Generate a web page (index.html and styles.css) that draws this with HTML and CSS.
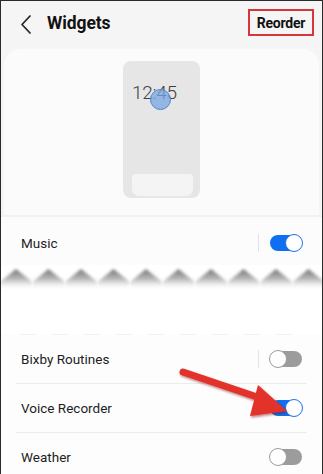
FILE: index.html
```html
<!DOCTYPE html>
<html>
<head>
<meta charset="utf-8">
<link rel="stylesheet" href="styles.css">
</head>
<body>
<div class="frame">
  <header class="topbar">
    <svg class="back" width="14" height="20" viewBox="0 0 14 20"><path d="M10 2 L2 10.5 L10 19" fill="none" stroke="#222" stroke-width="1.7" stroke-linecap="round" stroke-linejoin="round"/></svg>
    <h1 class="title">Widgets</h1>
    <span class="reorder">Reorder</span>
  </header>

  <section class="preview">
    <div class="phone">
      <div class="time">12:45</div>
      <div class="dot"></div>
      <div class="dock"></div>
    </div>
  </section>

  <section class="card">
    <div class="row">
      <span class="label">Music</span>
      <span class="vdiv"></span>
      <span class="toggle on"><span class="thumb"></span></span>
    </div>
    <div class="divider"></div>
  </section>

  <div class="tear">
    <svg width="323" height="26" viewBox="0 0 323 26">
      <defs>
        <linearGradient id="sh" x1="0" y1="0" x2="0" y2="1">
          <stop offset="0" stop-color="#747474"/>
          <stop offset="0.5" stop-color="#bdbdbd"/>
          <stop offset="1" stop-color="#ffffff" stop-opacity="0"/>
        </linearGradient>
        <filter id="bl"><feGaussianBlur stdDeviation="1.4"/></filter>
        <pattern id="zz" width="32.5" height="26" patternUnits="userSpaceOnUse" x="-1">
          <polygon points="0,17 16,4 32.5,17 32.5,25 0,25" fill="url(#sh)" filter="url(#bl)"/>
        </pattern>
      </defs>
      <rect x="0" y="0" width="323" height="26" fill="url(#zz)"/>
    </svg>
  </div>

  <div class="gap"></div>

  <section class="list">
    <div class="dashes"></div>
    <div class="row">
      <span class="label">Bixby Routines</span>
      <span class="vdiv"></span>
      <span class="toggle off"><span class="thumb"></span></span>
    </div>
    <div class="divider"></div>
    <div class="row">
      <span class="label">Voice Recorder</span>
      <span class="vdiv"></span>
      <span class="toggle on"><span class="thumb"></span></span>
    </div>
    <div class="divider"></div>
    <div class="row">
      <span class="label">Weather</span>
      <span class="toggle off"><span class="thumb"></span></span>
    </div>
  </section>

  <svg class="arrow" width="323" height="474" viewBox="0 0 323 474">
    <defs>
      <filter id="ds" x="-20%" y="-20%" width="140%" height="140%"><feDropShadow dx="1" dy="1.5" stdDeviation="1.2" flood-color="#7a1010" flood-opacity="0.55"/></filter>
    </defs>
    <g filter="url(#ds)">
      <line x1="182" y1="371" x2="262" y2="398" stroke="#e2302c" stroke-width="7" stroke-linecap="round"/>
      <polygon points="286,410 257,384 249,415" fill="#e2302c"/>
    </g>
  </svg>
</div>
</body>
</html>
```

FILE: styles.css
```css
* { box-sizing: border-box; margin: 0; padding: 0; }
html, body { width: 323px; height: 474px; overflow: hidden; }
body { background: #fff; font-family: Roboto, "Noto Sans", sans-serif; color: #1c1c1c; }

.frame {
  position: relative;
  width: 323px;
  height: 474px;
  overflow: hidden;
  background: #ffffff;
  border-left: 1px solid #2a2a2a;
  border-right: 1px solid #2a2a2a;
  border-top: 1px solid #2a2a2a;
}

.topbar {
  height: 44px;
  background: #f5f5f5;
  display: flex;
  align-items: center;
  padding: 0 8px 0 19px;
}
.back { margin-top: 1px; }
.title {
  font-size: 17.5px;
  font-weight: 700;
  margin-left: 13px;
  flex: 1;
  letter-spacing: -0.1px;
  color: #111;
}
.reorder {
  font-size: 14px;
  font-weight: 700;
  color: #111;
  border: 2px solid #d8343c;
  width: 66px;
  height: 27px;
  display: flex;
  align-items: center;
  justify-content: center;
  letter-spacing: -0.2px;
  margin-top: -1px;
}

.preview {
  background: #f5f5f5;
  height: 170px;
  display: flex;
  justify-content: center;
  position: relative;
}
.preview::before {
  content: "";
  position: absolute;
  left: 3px;
  right: 3px;
  top: 4px;
  bottom: 0;
  background: #fbfbfb;
  border-radius: 16px 16px 0 0;
}

.phone {
  position: relative;
  margin-top: 16px;
  width: 77px;
  height: 137px;
  background: #e6e6e6;
  border-radius: 8px;
  display: flex;
  flex-direction: column;
  align-items: stretch;
  padding: 22px 7px 2px 9px;
}
.time {
  font-size: 19px;
  font-weight: 300;
  color: #3e3e3e;
  letter-spacing: -0.3px;
  line-height: 20px;
}
.dot {
  position: absolute;
  left: 27px;
  top: 28px;
  width: 21px;
  height: 21px;
  border-radius: 50%;
  background: rgba(120, 165, 225, 0.75);
  border: 1.5px solid #4c86cf;
}
.dock {
  margin-top: auto;
  height: 22px;
  background: #f4f4f4;
  border-radius: 3px 3px 7px 7px;
}

.card {
  background: #fcfcfc;
  padding-top: 2px;
  border-top: 2px solid #f1f1f1;
}

.row {
  height: 48px;
  display: flex;
  align-items: center;
  padding: 0 20px 0 20px;
}
.label {
  font-size: 13.5px;
  color: #1e1e1e;
  flex: 1;
}
.vdiv {
  width: 1px;
  height: 18px;
  background: #e4e4e4;
  margin-right: 11px;
}
.divider {
  height: 1px;
  background: #ececec;
  margin: 0 15px;
}

.toggle {
  position: relative;
  width: 32px;
  height: 16px;
  border-radius: 8px;
  display: inline-block;
}
.toggle .thumb {
  position: absolute;
  top: -1px;
  width: 18px;
  height: 18px;
  border-radius: 50%;
  background: #fff;
}
.toggle.on { background: #0f6ff0; }
.toggle.on .thumb { right: -1px; border: 1.5px solid #1a72e8; }
.toggle.off { background: #9c9c9c; }
.toggle.off .thumb { left: -1px; border: 1.5px solid #9c9c9c; }

.tear { height: 26px; background: #fff; margin-top: -3px; }
.tear svg { display: block; }

.gap { height: 44px; background: #fff; }

.list { background: #fdfdfd; }
.dashes {
  height: 1px;
  margin: -1px 16px 0 20px;
  background: repeating-linear-gradient(90deg, #f0f0f0 0 14px, transparent 14px 32px);
}

.arrow { position: absolute; left: 0; top: 0; pointer-events: none; }
```
